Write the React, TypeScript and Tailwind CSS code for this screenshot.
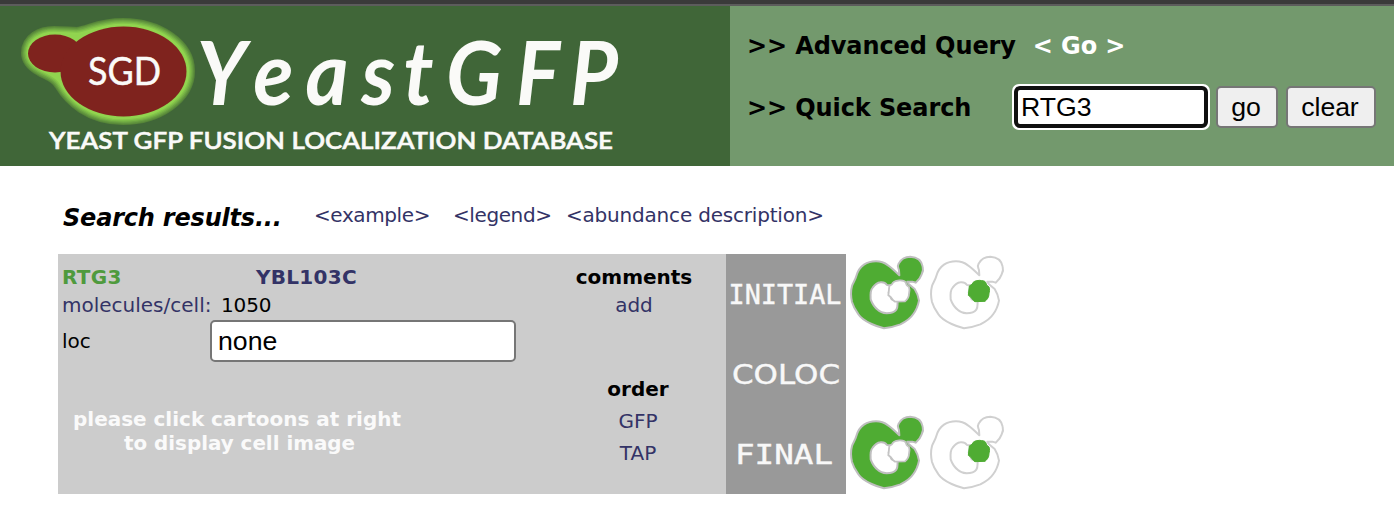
const verdana = "font-['DejaVu_Sans',Verdana,sans-serif]";
const arial = "font-['Liberation_Sans',Arial,sans-serif]";

const BODY =
  "M538 76 C526 64 516 54 504 46 C492 37 480 34 468 34 C453 34 441 38 432 44 C420 52 413 64 409 78 C406 90 399 98 396 108 C392 123 393 142 396 156 C400 170 407 181 414 191 C422 204 438 214 455 222 C468 228 480 232 492 235 C508 233 525 229 541 223 C557 215 571 206 580 192 C590 179 594 167 597 152 C595 137 591 128 584 117 L566 102 L562 95 L577 95 L587 98 C597 90 602 82 605 73 C609 66 610 57 608 50 C605 33 592 21 571 20 C553 20 542 29 536 41 C530 50 536 55 537 61 Z";
const VACUOLE =
  "M512 106 L501 105 C496 98 488 96 481 97 C470 98 463 106 458 113 C451 120 451 135 452 148 C456 160 463 171 474 180 C481 187 491 189 500 190 C512 190 524 186 529 179 C534 172 532 164 533 155 L515 148 L506 128 Z";
const NUCLEUS =
  "M508 108 L516 103 C519 94 527 92 538 91 C547 92 554 92 557 97 L560 105 L567 111 C570 119 568 126 567 131 C567 142 561 149 555 154 L525 155 C518 151 516 146 512 141 L505 136 Z";

function Cell({ kind }: { kind: "gfp" | "nucleus" }) {
  const gfp = kind === "gfp";
  return (
    <svg viewBox="378 12 240 240" className="block h-20 w-20">
      <g stroke={gfp ? "#bebebe" : "#d0d0d0"} strokeWidth="6" strokeLinejoin="round">
        <path d={BODY} fill={gfp ? "#4fac33" : "#fff"} />
        <path d={VACUOLE} fill="#fff" />
        <path d={NUCLEUS} fill={gfp ? "#fff" : "#4fac33"} stroke={gfp ? "#c4c4c4" : "#4fac33"} strokeWidth={gfp ? 5.5 : 3} />
      </g>
    </svg>
  );
}

function Logo() {
  return (
    <svg viewBox="0 6 730 160" className="block h-[160px] w-[730px] shrink-0 bg-[#406638]">
      <g strokeLinejoin="round">
        {[
          [14, "#568539"],
          [12, "#5f923d"],
          [10, "#6ba242"],
          [7.5, "#78b546"],
          [5, "#84c54a"],
          [2.5, "#91d44f"],
        ].map(([w, c]) => (
          <path
            key={c}
            d="M28 53 C28 40 41 33 54 33 C64 33 70 34 77 34 C90 32 100 25 123 25 C158 25 188 45 188 71 C188 97 158 118 123 118 C89 118 70 99 61 84 C56 75 46 73 40 69 C33 65 28 60 28 53 Z"
            fill={c as string}
            stroke={c as string}
            strokeWidth={w}
          />
        ))}
      </g>
      <ellipse cx="55" cy="53.500" rx="27" ry="19" fill="#7f231e" />
      <ellipse cx="123.500" cy="71.500" rx="63" ry="45" fill="#7f231e" />
      <g fill="#fafaf8" className="font-[Lato,sans-serif]">
        <text x="88" y="85" fontSize="39.500" stroke="#fafaf8" strokeWidth="0.5" textLength="73" lengthAdjust="spacingAndGlyphs">SGD</text>
        <text transform="scale(.94 1)" x="209 269.500 325 384.500 429 474.500 549 606.500" y="105" fontSize="88" fontWeight="700" fontStyle="italic">YeastGFP</text>
        <text x="49" y="149" fontSize="23" fontWeight="600" stroke="#fafaf8" strokeWidth="0.5" textLength="564" lengthAdjust="spacingAndGlyphs">YEAST GFP FUSION LOCALIZATION DATABASE</text>
      </g>
    </svg>
  );
}

function PanelLabel({ text, x, width, mono }: { text: string; x: number; width: number; mono?: boolean }) {
  return (
    <svg viewBox="0 0 120 80" className="block h-20 w-[120px]">
      <text
        x={x}
        y="50"
        fontSize="27"
        fill="#f8f8f8"
        stroke="#f8f8f8"
        strokeWidth="0.4"
        textLength={width}
        lengthAdjust="spacingAndGlyphs"
        className={mono ? "font-['DejaVu_Sans_Mono',monospace]" : "font-['DejaVu_Sans',sans-serif]"}
      >
        {text}
      </text>
    </svg>
  );
}

export default function App() {
  return (
    <div className={`${verdana} h-[524px] w-[1394px] overflow-hidden bg-white text-[20px] leading-7 text-black`}>
      <div className="h-1.5 border-b-2 border-[#5c5c5c] bg-[#3a3a3a]" />
      <header className="flex h-[160px]">
        <Logo />
        <div className="flex-1 bg-[#73996d] pl-[17px] text-2xl font-bold tracking-[-0.1px]">
          <div className="flex h-[78px] items-center gap-[17px] pt-0.5">
            <span>&gt;&gt; Advanced Query</span>
            <a className="text-white">&lt; Go &gt;</a>
          </div>
          <div className="flex h-[46px] items-center">
            <span className="w-[265px] pt-0.5">&gt;&gt; Quick Search</span>
            <div className="h-[46px] w-[198px] rounded-[7px] bg-white p-0.5">
              <input defaultValue="RTG3" className={`${arial} block h-[42px] w-[194px] rounded-[6px] border-4 border-[#101010] bg-white px-[3px] text-[26.67px] font-normal tracking-normal`} />
            </div>
            <button className={`${arial} ml-[6px] h-[42px] w-[62px] rounded-[5px] border-2 border-[#767676] bg-[#efefef] pr-[2px] text-[26.67px] leading-none font-normal`}>go</button>
            <button className={`${arial} ml-2 h-[42px] w-[90px] rounded-[5px] border-2 border-[#767676] bg-[#efefef] pr-[2px] text-[26.67px] leading-none font-normal`}>clear</button>
          </div>
        </div>
      </header>

      <div className="flex h-[88px] items-start pt-[35px] pl-[63px] tracking-[-0.2px] text-[#333366]">
        <h1 className="mt-[3px] w-[251px] text-2xl leading-7 font-bold text-black italic">Search results...</h1>
        <a className="w-[139px] tracking-[-0.4px]">&lt;example&gt;</a>
        <a className="w-[113px] tracking-[-0.4px]">&lt;legend&gt;</a>
        <a>&lt;abundance description&gt;</a>
      </div>

      <div className="ml-[58px] flex h-[240px]">
        <div className="flex w-[668px] bg-[#ccc] pt-[9px]">
          <div className="w-[484px] pl-1">
            <div className="flex font-bold tracking-[0.3px]">
              <span className="w-[194px] text-[#4f9a3d]">RTG3</span>
              <span className="text-[#333366]">YBL103C</span>
            </div>
            <div className="flex">
              <span className="w-[159px] text-[#333366]">molecules/cell:</span>
              <span className="tracking-[-0.15px]">1050</span>
            </div>
            <div className="flex h-[44px] items-center">
              <span className="w-[148px]">loc</span>
              <input defaultValue="none" className={`${arial} h-[42px] w-[306px] rounded-[5px] border-2 border-[#767676] bg-white px-[6px] text-[26.67px]`} />
            </div>
            <svg viewBox="62 363 400 110" className="block h-[110px] w-[400px] font-['DejaVu_Sans',sans-serif] font-bold">
              <g fill="#fafafa" fontSize="19">
                <text x="73" y="426" textLength="328" lengthAdjust="spacingAndGlyphs">please click cartoons at right</text>
                <text x="124" y="450" textLength="231" lengthAdjust="spacingAndGlyphs">to display cell image</text>
              </g>
            </svg>
          </div>
          <div className="flex w-[184px] flex-col items-center text-[#333366]">
            <span className="font-bold text-black">comments</span>
            <a>add</a>
            <span className="mt-[56px] ml-[8px] font-bold text-black">order</span>
            <a className="mt-1 ml-[8px]">GFP</a>
            <a className="mt-1 ml-[8px]">TAP</a>
          </div>
        </div>
        <div className="w-[120px] bg-[#999]">
          <PanelLabel text="INITIAL" x={2.5} width={113} mono />
          <PanelLabel text="COLOC" x={6} width={108} />
          <PanelLabel text="FINAL" x={9} width={98} mono />
        </div>
        <div className="flex flex-col justify-between">
          <div className="flex"><Cell kind="gfp" /><Cell kind="nucleus" /></div>
          <div className="flex"><Cell kind="gfp" /><Cell kind="nucleus" /></div>
        </div>
      </div>
    </div>
  );
}
